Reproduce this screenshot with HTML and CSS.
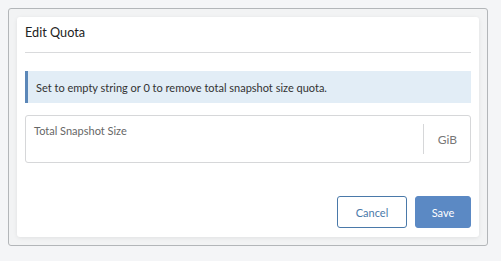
FILE: index.html
```html
<!DOCTYPE html>
<html lang="en">
<head>
  <meta charset="UTF-8" />
  <title>Edit Quota</title>
  <link rel="stylesheet" href="styles.css">
</head>
<body>
  <div class="frame">
    <div class="modal">
      <header class="modal-header">
        <h1>Edit Quota</h1>
      </header>

      <div class="info">Set to empty string or 0 to remove total snapshot size quota.</div>

      <div class="field">
        <label class="field-label">Total Snapshot Size</label>
        <span class="field-unit">GiB</span>
      </div>

      <footer class="actions">
        <button class="btn btn-outline">Cancel</button>
        <button class="btn btn-primary">Save</button>
      </footer>
    </div>
  </div>
</body>
</html>
```

FILE: styles.css
```css
/* base */
* { box-sizing: border-box; }
body {
  margin: 8px;
  background: #f4f5f7;
  font-family: Lato, "Liberation Sans", sans-serif;
  color: #333;
}

/* outer frame */
.frame {
  width: 480px; height: 238px;
  border: 1px solid #b3b6b9; border-radius: 3px;
  background: #f2f3f4;
  padding: 8px;
}

/* modal card */
.modal {
  height: 100%;
  background: #fff; border-radius: 3px;
  box-shadow: 0 1px 4px rgba(0,0,0,0.08);
  padding: 0 8px;
  display: flex; flex-direction: column;
}
.modal-header {
  height: 36px;
  border-bottom: 1px solid #d9dadc;
  display: flex; align-items: center;
  padding-bottom: 5px;
}
.modal-header h1 {
  margin: 0; font-size: 12.7px; font-weight: 400; color: #222;
}

.info {
  margin-top: 18px; height: 32px;
  background: #e2edf6; border-left: 3px solid #5b87b8;
  font-size: 11px; color: #333;
  padding: 0 0 0 8px;
  display: flex; align-items: center;
}

.field {
  margin-top: 12px; height: 48px;
  border: 1px solid #d6d7d9; border-radius: 3px;
  display: flex; justify-content: space-between;
}
.field-label {
  font-size: 11px; color: #666; padding: 8px 0 0 8px;
}
.field-unit {
  margin: 8px 0;
  width: 47px; border-left: 1px solid #d6d7d9;
  font-size: 12px; color: #777;
  display: flex; align-items: center; justify-content: center;
  padding-left: 1px;
}

.actions {
  margin-top: 33px;
  display: flex; justify-content: flex-end; gap: 8px;
}
.btn {
  height: 32px; border-radius: 3px;
  font-family: inherit; font-size: 11px;
  cursor: pointer;
}
.btn-outline {
  width: 70px; background: #fff;
  border: 1px solid #4a79a9; color: #4a79a9;
}
.btn-primary {
  width: 56px; background: #5b89c4;
  border: 1px solid #5b89c4; color: #fff;
}
```
